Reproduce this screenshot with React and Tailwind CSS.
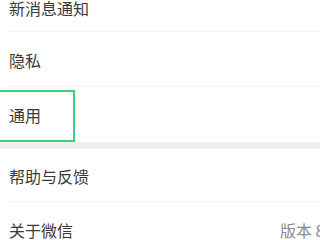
import React from "react";

const font = { fontFamily: '"Noto Sans CJK SC", "Noto Sans", sans-serif' };

function Row({ label, value, divider, h = "h-[55px]", children }) {
  return (
    <div className={`relative ${h} flex items-center pl-[9px]`}>
      <span className="text-[16px] text-[#3a3a3a] leading-none">{label}</span>
      {value && (
        <span className="ml-auto mr-[-40px] text-[16px] text-[#8a8a8a] leading-none whitespace-nowrap">
          {value}
        </span>
      )}
      {divider && (
        <div className="absolute left-[8px] right-0 bottom-0 h-px bg-[#f1f1f1]" />
      )}
      {children}
    </div>
  );
}

export default function App() {
  return (
    <div className="w-[320px] h-[240px] overflow-hidden bg-white" style={font}>
      <div className="w-[320px] -mt-[16px]">
        <Row label="新消息通知" divider h="h-[48px]" />
        <Row label="隐私" divider />
        <Row label="通用" h="h-[55px]">
          <div className="absolute left-[-2px] top-[3px] w-[77px] h-[52px] border-2 border-[#3fd07a]" />
        </Row>
        <div className="h-[7px] bg-[#efefef]" />
        <Row label="帮助与反馈" divider h="h-[53px]" />
        <Row label="关于微信" value="版本 8.0.50" />
      </div>
    </div>
  );
}
